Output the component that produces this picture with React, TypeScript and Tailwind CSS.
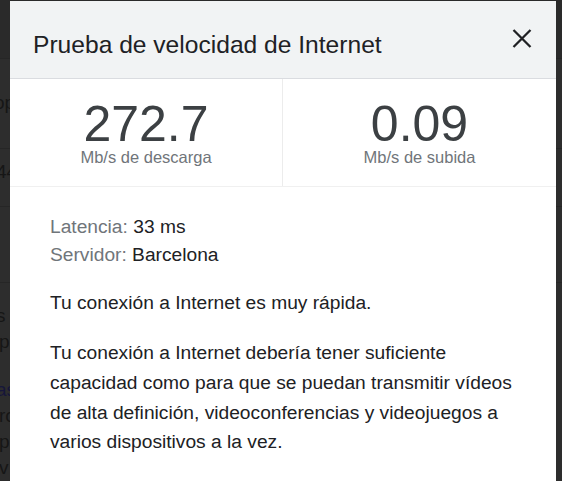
import React from 'react'

function BackdropPage() {
    // the page behind the dialog, already dimmed by the modal overlay
    return (
        <div className="flex flex-col h-full bg-[#2d2d2d] text-[19px] text-[#161616]">
            <div className="h-[60px] bg-[#2a2a2a] border-b border-[#262626]" />
            <div className="h-[93px] flex items-center border-b border-[#262626]">
                <span className="-ml-[6px] whitespace-nowrap">op velocidad</span>
            </div>
            <div className="h-[59px] flex items-start pt-[9px] border-b border-[#262626]">
                <span className="-ml-[4px] whitespace-nowrap">44 resultados</span>
            </div>
            <div className="h-[78px] border-b border-[#262626]" />
            <div className="flex flex-col pt-[20px] leading-[26px]">
                <span className="-ml-[4px] whitespace-nowrap">s c</span>
                <span className="-ml-[1px] whitespace-nowrap">p</span>
                <span className="mt-[22px] -ml-[4px] whitespace-nowrap text-[#16163a]">as</span>
                <span className="-ml-[1px] whitespace-nowrap">ro</span>
                <span className="-ml-[1px] whitespace-nowrap">p</span>
                <span className="-ml-[1px] whitespace-nowrap">v</span>
            </div>
        </div>
    )
}

function Stat({ value, label, divider }: { value: string; label: string; divider?: boolean }) {
    return (
        <div className={`flex flex-col items-center pt-[20px] pb-[21px] ${divider ? 'border-r border-[#ececec]' : ''}`}>
            <div className="text-[50px] leading-[50px] text-[#3c4043]">{value}</div>
            <div className="text-[16.5px] leading-[16px] text-[#70757a]">{label}</div>
        </div>
    )
}

export default function App() {
    return (
        <div className="relative w-[562px] h-[481px] overflow-hidden font-['Liberation_Sans',Arial,sans-serif]">
            <BackdropPage />

            <div className="absolute left-[10px] top-[1px] w-[546px] h-[480px] bg-white">
                <div className="h-[78px] flex items-start justify-between pl-[23px] pr-[24px] pt-[28px] bg-[#f1f3f4] border-b border-[#dadce0]">
                    <h1 className="text-[24.6px] leading-[30px] mt-[1px] text-[#202124]">
                        Prueba de velocidad de Internet
                    </h1>
                    <svg width="20" height="19" viewBox="0 0 20 19">
                        <path d="M1.5 1 L18.5 18 M18.5 1 L1.5 18" stroke="#202124" strokeWidth="2.3" />
                    </svg>
                </div>

                <div className="grid grid-cols-2 border-b border-[#f0f0f0]">
                    <Stat value="272.7" label="Mb/s de descarga" divider />
                    <Stat value="0.09" label="Mb/s de subida" />
                </div>

                <div className="px-[40px] pt-[26px] text-[19.2px] text-[#202124]">
                    <div className="leading-[28.4px]">
                        <div>
                            <span className="text-[#70757a]">Latencia: </span>33 ms
                        </div>
                        <div>
                            <span className="text-[#70757a]">Servidor: </span>Barcelona
                        </div>
                    </div>
                    <p className="mt-[19px] leading-[28.5px]">Tu conexión a Internet es muy rápida.</p>
                    <p className="mt-[21px] leading-[29.6px]">
                        Tu conexión a Internet debería tener suficiente
                        <br />
                        capacidad como para que se puedan transmitir vídeos
                        <br />
                        de alta definición, videoconferencias y videojuegos a
                        <br />
                        varios dispositivos a la vez.
                    </p>
                </div>
            </div>
        </div>
    )
}
